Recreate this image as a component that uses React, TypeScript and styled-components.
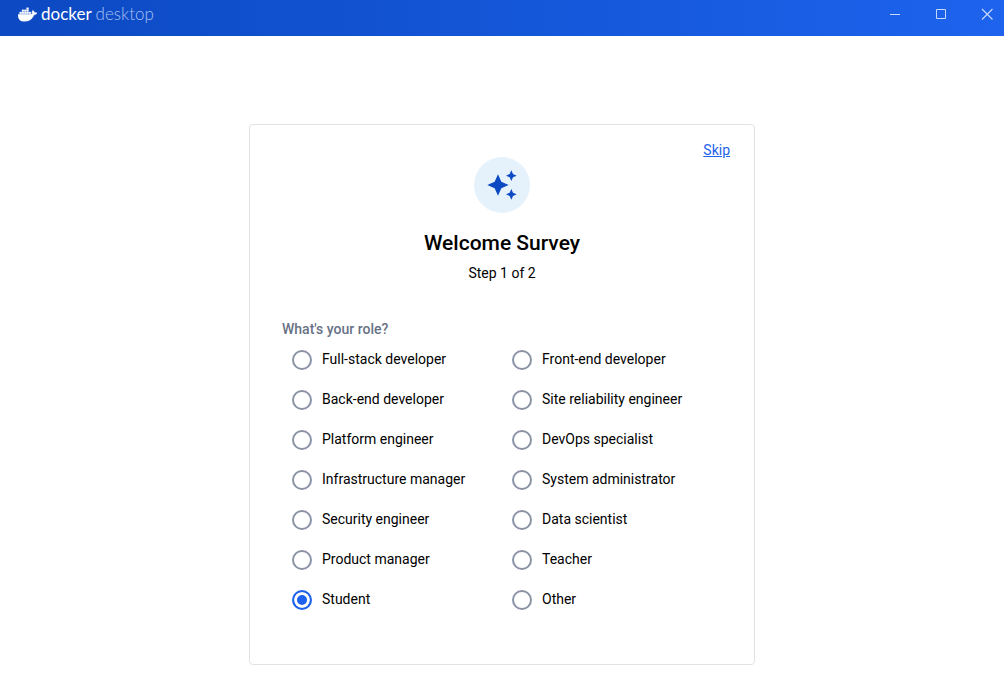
import React, { useState } from "react";
import styled, { createGlobalStyle } from "styled-components";
import { MdAutoAwesome } from "react-icons/md";
import { SiDocker } from "react-icons/si";

const GlobalStyle = createGlobalStyle`
  *, *::before, *::after { box-sizing: border-box; }
  body {
    margin: 0;
    background: #ffffff;
    color: #000000;
    font-family: Roboto, "Liberation Sans", sans-serif;
    font-size: 14px;
    line-height: 20px;
  }
`;

const TitleBar = styled.header`
  display: flex;
  align-items: flex-start;
  justify-content: space-between;
  height: 36px;
  padding-left: 18px;
  background: linear-gradient(90deg, #0c49c2 0%, #1d63ed 100%);
  color: #ffffff;
`;

const Brand = styled.div`
  display: flex;
  align-items: center;
  gap: 4px;
  height: 28px;
  font-family: Lato, sans-serif;
  font-size: 17px;
  line-height: 28px;
`;

const BrandName = styled.span<{ $light?: boolean }>`
  font-weight: ${(p) => (p.$light ? 300 : 400)};
  color: ${(p) => (p.$light ? "#a9c1f2" : "#ffffff")};
`;

const WindowControls = styled.div`
  display: flex;
  gap: 12px;
`;

const WindowButton = styled.button`
  display: flex;
  align-items: center;
  justify-content: center;
  width: 34px;
  height: 28px;
  padding: 0;
  border: 0;
  background: transparent;
  color: #c6d8fb;
`;

const Page = styled.main`
  display: flex;
  justify-content: center;
  padding: 88px 16px 15px;
`;

const Card = styled.section`
  width: 100%;
  max-width: 506px;
  padding: 15px 24px 44px 32px;
  border: 1px solid #e1e2e6;
  border-radius: 4px;
`;

const SkipRow = styled.div`
  display: flex;
  justify-content: flex-end;
  height: 17px;
`;

const SkipLink = styled.a`
  color: #1d63ed;
  text-decoration: underline;
`;

const Intro = styled.div`
  display: flex;
  flex-direction: column;
  align-items: center;
  padding-right: 8px;
`;

const IconDisc = styled.div`
  display: flex;
  align-items: center;
  justify-content: center;
  width: 56px;
  height: 56px;
  border-radius: 50%;
  background: #e5f2fc;
  color: #0c49c2;
`;

const Title = styled.h1`
  margin: 14px 0 0;
  font-size: 21px;
  font-weight: 500;
  line-height: 32px;
`;

const Step = styled.p`
  margin: 4px 0 0;
`;

const RoleGroup = styled.fieldset`
  margin: 36px 0 0;
  padding: 0;
  border: 0;
`;

const Question = styled.legend`
  padding: 0 0 1px;
  color: #677285;
  font-weight: 500;
  line-height: 20px;
`;

const Options = styled.div`
  display: grid;
  grid-template-columns: repeat(2, 220px);
`;

const Option = styled.label`
  display: flex;
  align-items: center;
  gap: 10px;
  height: 40px;
  padding-left: 10px;
`;

const OptionText = styled.span`
  padding-bottom: 2px;
`;

const Radio = styled.input`
  appearance: none;
  flex: none;
  width: 20px;
  height: 20px;
  margin: 0;
  border: 2px solid #8993a5;
  border-radius: 50%;
  background: #ffffff;

  &:checked {
    border-color: #1d63ed;
    background: #1d63ed;
    box-shadow: inset 0 0 0 3px #ffffff;
  }
`;

const roles = [
  "Full-stack developer",
  "Front-end developer",
  "Back-end developer",
  "Site reliability engineer",
  "Platform engineer",
  "DevOps specialist",
  "Infrastructure manager",
  "System administrator",
  "Security engineer",
  "Data scientist",
  "Product manager",
  "Teacher",
  "Student",
  "Other",
];

export default function App() {
  const [role, setRole] = useState("Student");

  return (
    <>
      <GlobalStyle />
      <TitleBar>
        <Brand>
          <SiDocker size={19} stroke="currentColor" strokeWidth={0.4} aria-hidden />
          <BrandName>docker</BrandName>
          <BrandName $light>desktop</BrandName>
        </Brand>
        <WindowControls>
          <WindowButton aria-label="Minimize">
            <svg width="12" height="12" viewBox="0 0 12 12" shapeRendering="crispEdges">
              <path d="M1 6h10v1H1z" fill="currentColor" />
            </svg>
          </WindowButton>
          <WindowButton aria-label="Maximize">
            <svg width="12" height="12" viewBox="0 0 12 12" fill="none" stroke="currentColor">
              <path d="M1.5 1.5h9v9h-9z" />
            </svg>
          </WindowButton>
          <WindowButton aria-label="Close">
            <svg width="12" height="12" viewBox="0 0 12 12" fill="none" stroke="currentColor">
              <path d="M1 1l10.500 10.500M11.500 1L1 11.500" strokeWidth="1.200" />
            </svg>
          </WindowButton>
        </WindowControls>
      </TitleBar>
      <Page>
        <Card>
          <SkipRow>
            <SkipLink href="#skip">Skip</SkipLink>
          </SkipRow>
          <Intro>
            <IconDisc>
              <MdAutoAwesome size={32} aria-hidden />
            </IconDisc>
            <Title>Welcome Survey</Title>
            <Step>Step 1 of 2</Step>
          </Intro>
          <RoleGroup>
            <Question>What's your role?</Question>
            <Options>
              {roles.map((name) => (
                <Option key={name}>
                  <Radio
                    type="radio"
                    name="role"
                    value={name}
                    checked={role === name}
                    onChange={() => setRole(name)}
                  />
                  <OptionText>{name}</OptionText>
                </Option>
              ))}
            </Options>
          </RoleGroup>
        </Card>
      </Page>
    </>
  );
}
